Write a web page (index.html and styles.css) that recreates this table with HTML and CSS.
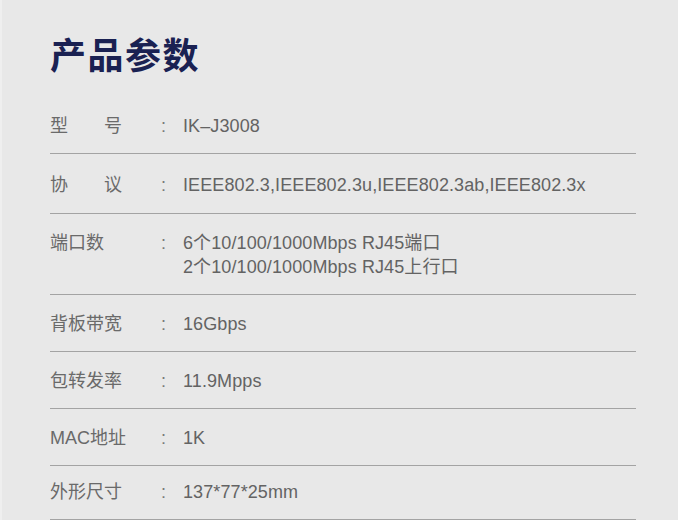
FILE: index.html
```html
<!DOCTYPE html>
<html lang="zh-CN">
<head>
<meta charset="utf-8">
<title>产品参数</title>
<link rel="stylesheet" href="styles.css">
</head>
<body>
<main class="page">
  <h1 class="title">产品参数</h1>
  <div class="specs">
    <div class="row">
      <div class="label spread"><span>型</span><span>号</span></div>
      <div class="colon">:</div>
      <div class="value">IK–J3008</div>
    </div>
    <div class="row row-tall">
      <div class="label spread"><span>协</span><span>议</span></div>
      <div class="colon">:</div>
      <div class="value">IEEE802.3,IEEE802.3u,IEEE802.3ab,IEEE802.3x</div>
    </div>
    <div class="row">
      <div class="label">端口数</div>
      <div class="colon">:</div>
      <div class="value">6个10/100/1000Mbps RJ45端口<br>2个10/100/1000Mbps RJ45上行口</div>
    </div>
    <div class="row">
      <div class="label">背板带宽</div>
      <div class="colon">:</div>
      <div class="value">16Gbps</div>
    </div>
    <div class="row">
      <div class="label">包转发率</div>
      <div class="colon">:</div>
      <div class="value">11.9Mpps</div>
    </div>
    <div class="row">
      <div class="label">MAC地址</div>
      <div class="colon">:</div>
      <div class="value">1K</div>
    </div>
    <div class="row row-last">
      <div class="label">外形尺寸</div>
      <div class="colon">:</div>
      <div class="value">137*77*25mm</div>
    </div>
  </div>
</main>
</body>
</html>
```

FILE: styles.css
```css
html, body {
  margin: 0;
  padding: 0;
}

body {
  background: #e8e8e8;
  box-shadow: inset 2px 0 0 #efefef;
  min-height: 520px;
  font-family: "Liberation Sans", "Noto Sans CJK SC", sans-serif;
  color: #666666;
}

.page {
  padding: 33px 0 0 50px;
  width: 586px;
}

.title {
  margin: 0 0 24px 0;
  font-family: "Noto Sans CJK SC", sans-serif;
  font-weight: 700;
  font-size: 36px;
  line-height: 40px;
  letter-spacing: 1.5px;
  color: #1a2152;
}

.specs {
  display: flex;
  flex-direction: column;
}

.row {
  display: grid;
  grid-template-columns: 111px 23px 1fr;
  padding: 17px 0 15px 0;
  border-bottom: 1px solid #a3a3a3;
  font-size: 18px;
  line-height: 24px;
}

.row-tall {
  padding: 19px 0 16px 0;
}

.row-last {
  padding: 14px 0 15px 0;
}

.label {
  color: #6a6a6a;
}

.spread {
  display: flex;
  justify-content: space-between;
  width: 72px;
}

.colon {
  color: #7a7a7a;
}

.value {
  color: #636363;
  margin-left: -1px;
  letter-spacing: 0.1px;
}
```
